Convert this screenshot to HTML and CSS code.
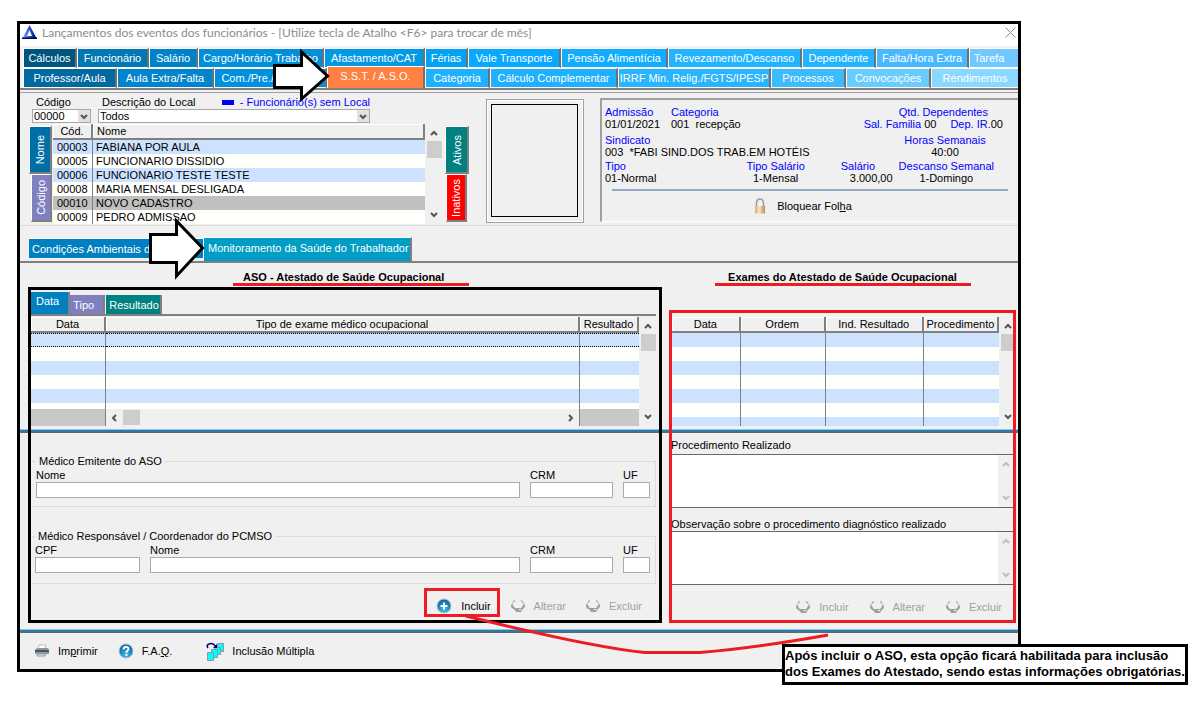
FILE: index.html
```html
<!DOCTYPE html>
<html lang="pt-BR">
<head>
<meta charset="utf-8">
<title>Lançamentos dos eventos dos funcionários</title>
<link rel="stylesheet" href="styles.css">
</head>
<body>
<svg class="defs" aria-hidden="true">
  <defs>
    <linearGradient id="gold" x1="0" x2="1"><stop offset="0" stop-color="#d9ab74"/><stop offset=".45" stop-color="#fbe2bd"/><stop offset="1" stop-color="#b98a55"/></linearGradient>
    <radialGradient id="ball" cx=".5" cy=".8" r=".8"><stop offset="0" stop-color="#3cc0ea"/><stop offset=".6" stop-color="#1682b8"/><stop offset="1" stop-color="#1a5f8c"/></radialGradient>
    <linearGradient id="tri" x1="0" x2="1"><stop offset="0" stop-color="#8ab8ff"/><stop offset=".5" stop-color="#2c50d0"/><stop offset="1" stop-color="#000060"/></linearGradient>
  </defs>
  <symbol id="up" viewBox="0 0 8 6"><path d="M1 5 4 2l3 3" fill="none" stroke="currentColor" stroke-width="2"/></symbol>
  <symbol id="down" viewBox="0 0 8 6"><path d="M1 1l3 3 3-3" fill="none" stroke="currentColor" stroke-width="2"/></symbol>
  <symbol id="off" viewBox="0 0 14 14"><path d="M4 1.500Q1 3 1 7M10 1.500Q13 3 13 7" fill="none" stroke="#a0a0a0" stroke-width="1.200" stroke-dasharray="3 1"/><path d="M0 6h2l1 2 1 1h6l1-1 1-2h2v2l-2 2-1 1-1 2H5l-1-2-2-1-2-2z" fill="#a0a0a0"/><path d="M8 10h2v1H8z" fill="#fff"/></symbol>
</svg>

<main class="window">
  <header class="titlebar">
    <svg width="15" height="15" viewBox="0 0 15 15" aria-hidden="true"><path d="M7.500 0 15 14H0z" fill="url(#tri)"/><path d="M7.500 5 10 11H5z" fill="#fff"/><path d="M0 12.500h15V14H0z" fill="#000060"/></svg>
    <h1>Lançamentos dos eventos dos funcionários - [Utilize tecla de Atalho &lt;F6&gt; para trocar de mês]</h1>
    <button class="close" type="button" aria-label="Fechar"><svg width="11" height="11" viewBox="0 0 11 11"><path d="M.5.5l10 10m0-10l-10 10" stroke="#909090"/></svg></button>
  </header>

  <nav class="tabs">
    <div class="tabrow first">
      <button type="button">Cálculos</button><button type="button">Funcionário</button><button type="button">Salário</button><button type="button">Cargo/Horário Trabalho</button><button type="button">Afastamento/CAT</button><button type="button">Férias</button><button type="button">Vale Transporte</button><button type="button">Pensão Alimentícia</button><button type="button">Revezamento/Descanso</button><button type="button">Dependente</button><button type="button">Falta/Hora Extra</button><button type="button">Tarefa</button>
    </div>
    <div class="tabrow second">
      <button type="button">Professor/Aula</button><button type="button">Aula Extra/Falta</button><button type="button">Com./Pre./Adicional</button><button type="button" class="active">S.S.T. / A.S.O.</button><button type="button">Categoria</button><button type="button">Cálculo Complementar</button><button type="button">IRRF Min. Relig./FGTS/IPESP</button><button type="button">Processos</button><button type="button">Convocações</button><button type="button">Rendimentos</button>
    </div>
  </nav>

  <section class="top">
    <div class="people">
      <div class="place">
        <div class="pick code"><label for="cod">Código</label><div class="combo"><select id="cod"><option>00000</option></select><svg width="8" height="6"><use href="#down"/></svg></div></div>
        <div class="pick local">
          <div class="labels"><label for="loc">Descrição do Local</label><span class="swatch"></span><span class="blue">- Funcionário(s) sem Local</span></div>
          <div class="combo"><select id="loc"><option>Todos</option></select><svg width="8" height="6"><use href="#down"/></svg></div>
        </div>
      </div>
      <div class="roster">
        <div class="vtabs left"><button type="button" class="on">Nome</button><button type="button">Código</button></div>
        <table class="list">
          <thead><tr><th class="c">Cód.</th><th>Nome</th></tr></thead>
          <tbody>
            <tr><td>00003</td><td>FABIANA POR AULA</td></tr>
            <tr><td>00005</td><td>FUNCIONARIO DISSIDIO</td></tr>
            <tr><td>00006</td><td>FUNCIONARIO TESTE TESTE</td></tr>
            <tr><td>00008</td><td>MARIA MENSAL DESLIGADA</td></tr>
            <tr class="selected"><td>00010</td><td>NOVO CADASTRO</td></tr>
            <tr><td>00009</td><td>PEDRO ADMISSAO</td></tr>
          </tbody>
        </table>
        <div class="scroll"><svg width="8" height="6"><use href="#up"/></svg><i></i><svg width="8" height="6"><use href="#down"/></svg></div>
        <div class="vtabs right"><button type="button" class="on">Ativos</button><button type="button">Inativos</button></div>
      </div>
    </div>
    <div class="photo"><div></div></div>
    <div class="info">
      <div class="line">
        <p class="w1"><b>Admissão</b>01/01/2021</p><p><b>Categoria</b>001&nbsp; recepção</p>
        <div class="deps"><b>Qtd. Dependentes</b><span><b>Sal. Familia</b> 00</span><span class="ir"><b>Dep. IR.</b>00</span></div>
      </div>
      <div class="line second-line">
        <p><b>Sindicato</b>003&nbsp; *FABI SIND.DOS TRAB.EM HOTÉIS</p><p class="mid hours"><b>Horas Semanais</b>40:00</p>
      </div>
      <div class="line">
        <p><b>Tipo</b>01-Normal</p><p class="mid kind"><b>Tipo Salário</b>1-Mensal</p><p class="pay"><b>Salário</b><span>3.000,00</span></p><p class="mid rest"><b>Descanso Semanal</b>1-Domingo</p>
      </div>
      <hr>
      <button type="button" class="lock"><svg width="12" height="16" viewBox="0 0 12 16"><path d="M2.500 8V4.500Q3 1 6 1t3.500 3.500V8" fill="none" stroke="#9a9a9a" stroke-width="1.500"/><rect x="1" y="8" width="10" height="7.500" fill="url(#gold)"/></svg><span>Bloquear Fol<u>h</u>a</span></button>
    </div>
  </section>

  <nav class="subtabs">
    <button type="button">Condições Ambientais de Trab.</button><button type="button" class="active">Monitoramento da Saúde do Trabalhador</button>
  </nav>

  <section class="board">
    <h2 class="ht-left"><span>ASO - Atestado de Saúde Ocupacional</span></h2>
    <h2 class="ht-right"><span>Exames do Atestado de Saúde Ocupacional</span></h2>

    <div class="aso">
      <div class="sort"><button type="button" class="on">Data</button><button type="button">Tipo</button><button type="button">Resultado</button></div>
      <div class="gridbox">
        <table class="list exams">
          <colgroup><col class="k1"><col><col class="k3"></colgroup>
          <thead><tr><th>Data</th><th>Tipo de exame médico ocupacional</th><th>Resultado</th></tr></thead>
          <tbody>
            <tr class="focus"><td></td><td></td><td></td></tr><tr><td></td><td></td><td></td></tr><tr><td></td><td></td><td></td></tr><tr><td></td><td></td><td></td></tr><tr><td></td><td></td><td></td></tr><tr class="cut"><td></td><td></td><td></td></tr>
          </tbody>
          <tfoot><tr><td></td><td><div class="hscroll"><svg width="6" height="8" viewBox="0 0 6 8"><path d="M5 1 2 4l3 3" fill="none" stroke="#555" stroke-width="2"/></svg><i></i><svg width="6" height="8" viewBox="0 0 6 8"><path d="M1 1l3 3-3 3" fill="none" stroke="#555" stroke-width="2"/></svg></div></td><td></td></tr></tfoot>
        </table>
        <div class="scroll"><svg width="8" height="6"><use href="#up"/></svg><i></i><svg width="8" height="6"><use href="#down"/></svg></div>
      </div>
    </div>

    <div class="exames gridbox">
      <table class="list exams">
        <colgroup><col class="r1"><col class="r2"><col class="r3"><col class="r4"></colgroup>
        <thead><tr><th>Data</th><th>Ordem</th><th>Ind. Resultado</th><th>Procedimento</th></tr></thead>
        <tbody>
          <tr><td></td><td></td><td></td><td></td></tr><tr><td></td><td></td><td></td><td></td></tr><tr><td></td><td></td><td></td><td></td></tr><tr><td></td><td></td><td></td><td></td></tr><tr><td></td><td></td><td></td><td></td></tr><tr><td></td><td></td><td></td><td></td></tr><tr class="last"><td></td><td></td><td></td><td></td></tr>
        </tbody>
      </table>
      <div class="scroll"><svg width="8" height="6"><use href="#up"/></svg><i></i><svg width="8" height="6"><use href="#down"/></svg></div>
    </div>

    <hr class="rule">

    <form class="doctors">
      <fieldset class="f1">
        <legend>Médico Emitente do ASO</legend>
        <div><label for="n1">Nome</label><input id="n1"></div><div><label for="c1">CRM</label><input id="c1"></div><div><label for="u1">UF</label><input id="u1"></div>
      </fieldset>
      <fieldset class="f2">
        <legend>Médico Responsável / Coordenador do PCMSO</legend>
        <div><label for="cpf">CPF</label><input id="cpf"></div><div><label for="n2">Nome</label><input id="n2"></div><div><label for="c2">CRM</label><input id="c2"></div><div><label for="u2">UF</label><input id="u2"></div>
      </fieldset>
      <div class="actions">
        <button type="button" class="add"><svg width="16" height="16" viewBox="0 0 16 16"><circle cx="8" cy="8" r="7" fill="url(#ball)" stroke="#b8c4cc"/><path d="M8 4.500v7M4.500 8h7" stroke="#fff" stroke-width="2"/></svg>Incluir</button>
        <button type="button" disabled><svg width="14" height="14"><use href="#off"/></svg>Alterar</button>
        <button type="button" disabled><svg width="14" height="14"><use href="#off"/></svg>Excluir</button>
      </div>
    </form>

    <form class="notes">
      <label for="proc">Procedimento Realizado</label>
      <div class="memo"><textarea id="proc"></textarea><div class="scroll dim"><svg width="8" height="6"><use href="#up"/></svg><svg width="8" height="6"><use href="#down"/></svg></div></div>
      <label for="obs">Observação sobre o procedimento diagnóstico realizado</label>
      <div class="memo"><textarea id="obs"></textarea><div class="scroll dim"><svg width="8" height="6"><use href="#up"/></svg><svg width="8" height="6"><use href="#down"/></svg></div></div>
      <div class="actions">
        <button type="button" disabled><svg width="14" height="14"><use href="#off"/></svg>Incluir</button>
        <button type="button" disabled><svg width="14" height="14"><use href="#off"/></svg>Alterar</button>
        <button type="button" disabled><svg width="14" height="14"><use href="#off"/></svg>Excluir</button>
      </div>
    </form>

    <div class="frame black"></div>
    <div class="frame red"></div>
  </section>

  <hr class="rule">
  <footer class="foot">
    <button type="button"><svg width="16" height="14" viewBox="0 0 16 14"><path d="M4 5 5 1h7l-1 4z" fill="#fff" stroke="#bbb"/><path d="M1 6l2-2h11l1 2v4H1z" fill="#8f979c"/><path d="M1 6h14v2H1z" fill="#4e565c"/><path d="M3 10h9l-1 2H3z" fill="#e8e8e8" stroke="#999"/><path d="M12 9h2" stroke="#35b5e8"/></svg><span>Im<u>p</u>rimir</span></button>
    <button type="button"><svg width="16" height="16" viewBox="0 0 16 16"><circle cx="8" cy="8" r="7" fill="url(#ball)" stroke="#b8c4cc"/><path d="M5.500 6.500Q5.500 4 8 4t2.500 2Q10.500 7 8.500 8.500V10" fill="none" stroke="#fff" stroke-width="1.800"/><path d="M7.500 11h2v1.800h-2z" fill="#fff"/></svg><span>F.A.<u>Q</u>.</span></button>
    <button type="button"><svg width="18" height="19" viewBox="0 0 18 19"><g fill="#00ffff" stroke="#8a9a9a"><path d="M11.500 1.500h6v8h-6z"/><path d="M8.500 5.500h6v7h-6z"/><path d="M5.500 7.500h6v8h-6z"/><path d="M1.500 10.500h6v8h-6z"/></g><path d="M2 6Q0 3 3 2q4-2 7 3" fill="none" stroke="#000080" stroke-width="1.500"/><path d="M11 2v4H7z" fill="#000080"/></svg><span>Inclusão Múltipla</span></button>
  </footer>

  <svg class="marks" width="1000" height="648" viewBox="20 24 1000 648" aria-hidden="true">
    <path d="M274.500 65.500H301.500V52L327.500 76 301.500 99V87.500H274.500z" fill="#fff" stroke="#000" stroke-width="3"/>
    <path d="M150.500 234.500H176.500V221L202.500 248 176.500 276V262.500H150.500z" fill="#fff" stroke="#000" stroke-width="3"/>
    <path d="M424 588h76v29h-76z M427 591v23h70v-23z" fill="#ed1c24" fill-rule="evenodd"/>
    <path d="M466 616Q590 647 645 652.500H700Q755 648 828 635" fill="none" stroke="#ed1c24" stroke-width="3"/>
  </svg>
  <aside class="callout">Após incluir o ASO, esta opção ficará habilitada para inclusão<br>dos Exames do Atestado, sendo estas informações obrigatórias.</aside>
</main>
</body>
</html>
```
FILE: styles.css
```css
* { box-sizing: border-box; }
body { margin: 0; padding: 21px 181px 34px 17px; background: #fff; color: #000; font: 11px/12px "Liberation Sans", Arial, sans-serif; }
button, input, select, textarea { font: inherit; color: inherit; margin: 0; padding: 0; border: 0; border-radius: 0; background: none; }
button { white-space: nowrap; }
p, h1, h2 { margin: 0; }
svg { display: block; flex: none; }
.defs { position: absolute; width: 0; height: 0; }

.window { position: relative; border: 3px solid #000; background: #f0f0f0; }

.titlebar { display: flex; align-items: center; gap: 5px; height: 22px; padding: 0 2px 5px; background: #fff; }
.titlebar h1 { flex: 1; font: 12px/16px Lato, "Open Sans", sans-serif; color: #8c8c8c; white-space: nowrap; }

/* main tabs */
.tabs { padding: 2px 0 0 3px; border-bottom: 2px solid #808080; }
.tabrow { display: grid; height: 20px; }
.first { grid-template-columns: 54fr 72fr 49fr 126fr 101fr 43fr 93fr 107fr 134fr 74fr 93fr 49fr; }
.second { grid-template-columns: 94fr 97fr 113fr 98fr 65fr 128fr 153fr 75fr 85fr 87fr; }
.tabrow button { min-width: 0; overflow: hidden; color: #fff; border: 1px solid #fff; border-right: 2px solid #707070; }
.tabrow button:last-child { border-right: 0; }
.first :last-child { padding-right: 10px; }
.first :nth-child(1) { background: #00557f; }
.first :nth-child(2) { background: #0078b4; }
.first :nth-child(3) { background: #0082c8; }
.first :nth-child(4) { background: #008fd8; }
.first :nth-child(5) { background: #0099e5; }
.first :nth-child(6) { background: #00a2f3; }
.first :nth-child(7) { background: #06a9ff; }
.first :nth-child(8) { background: #12adff; }
.first :nth-child(9), .first :nth-child(10) { background: #22b4ff; }
.first :nth-child(11) { background: #48b8ff; }
.first :nth-child(12) { background: #70c8ff; }
.second :nth-child(1) { background: #0069a0; }
.second :nth-child(2) { background: #0084cc; }
.second :nth-child(3) { background: #0090dc; }
.second :nth-child(5), .second :nth-child(6) { background: #1fb0ff; }
.second :nth-child(7) { background: #28b4ff; }
.second :nth-child(8) { background: #3cbcff; }
.second :nth-child(9) { background: #68ccff; }
.second :nth-child(10) { background: #8ad8ff; }
.second .active { margin: -2px 0 0; padding-bottom: 3px; background: #ff8040; border-bottom: 0; }

/* employee area */
.top { display: flex; align-items: flex-start; padding: 3px 0 1px 9px; border-top: 1px solid #a0a0a0; border-bottom: 1px solid #d8d8d8; margin-top: 2px; }
.people { flex: none; width: 441px; }
.place { display: flex; gap: 7px; padding-left: 3px; }
.code { width: 59px; }
.code label { padding-left: 4px; }
.local { width: 272px; }
.labels { display: flex; align-items: center; padding-left: 4px; white-space: nowrap; }
.swatch { width: 14px; height: 5px; margin: 0 6px 0 26px; background: #00f; }
.blue, .info b { color: #00f; font-weight: normal; }
.combo { display: grid; margin-top: 1px; border: 1px solid #a8a8a8; background: #fff; }
.combo > * { grid-area: 1 / 1; }
.combo select { appearance: none; height: 12px; width: 100%; padding-left: 1px; outline: 0; }
.combo svg { justify-self: end; width: 12px; height: 12px; padding: 4px 2px 2px; background: #e1e1e1; color: #555; pointer-events: none; }
.roster { display: flex; margin-top: 1px; }
.list { table-layout: fixed; border-spacing: 0; width: 100%; }
.list th { height: 16px; padding: 0 4px; font-weight: normal; line-height: 12px; text-align: left; border: solid #808080; border-width: 0 2px 2px 0; box-shadow: inset 1px 1px #fff; }
.list td { height: 14px; padding: 0 3px; line-height: 14px; background: #fffffc; border-right: 1px solid #808080; white-space: nowrap; }
.list tbody tr:nth-child(odd) td { background: #cce2ff; }
.list tbody tr.selected td { background: #c0c0c0; }
.list td:last-child { border-right: 0; }
.roster .list { width: 372px; }
.roster .c { width: 40px; text-align: center; }
.roster td:first-child { padding-left: 4px; }
.vtabs { display: flex; flex-direction: column; padding-top: 2px; }
.vtabs button { writing-mode: sideways-lr; height: 48px; color: #fff; border: 1px solid #fff; border-right: 2px solid #808080; border-bottom: 2px solid #808080; }
.left { width: 24px; padding-right: 1px; }
.left button { margin-left: 2px; background: #8080c0; }
.left .on { margin: 0; background: #006fa6; }
.right { width: 24px; margin-left: 3px; }
.right button { margin: 0 2px 0 1px; background: #f00; }
.right .on { margin: 0; background: #008080; }
.scroll { display: flex; flex-direction: column; align-items: center; flex: none; width: 16px; margin-left: 1px; padding: 6px 0; background: #f0f0f0; color: #555; }
.scroll i { width: 15px; height: 17px; margin: 5px 0 auto; background: #cdcdcd; }
.photo { flex: none; width: 98px; height: 124px; margin: 3px 16px 0; padding: 4px; border: 1px solid #a0a0a0; outline: 1px solid #fff; outline-offset: -2px; border-right-width: 2px; border-bottom-width: 2px; }
.photo div { height: 100%; border: 1px solid #000; }
.info { flex: 1; margin-top: 2px; padding: 6px 9px 6px 3px; border: solid #a0a0a0; border-width: 2px 0 0 2px; border-bottom: 1px solid #fff; }
.line { display: flex; height: 24px; white-space: nowrap; }
.line:first-child { margin-bottom: 4px; }
.second-line { margin-bottom: 2px; }
.info p b, .deps > b { display: block; }
.w1 { width: 66px; }
.mid { text-align: center; }
.deps { margin-left: auto; display: grid; grid-template-columns: auto auto; column-gap: 14px; padding-right: 6px; }
.deps > b { grid-column: 1 / 3; text-align: center; padding-left: 20px; }
.hours { margin-left: auto; width: 94px; margin-right: 17px; }
.kind { margin-left: auto; }
.pay { margin: 0 6px 0 36px; }
.pay span { padding-left: 9px; }
.rest { margin-right: 15px; }
.info hr { height: 2px; margin: 5px 1px 6px 7px; border: 0; background: #92a7c0; }
.lock { display: flex; align-items: center; gap: 11px; margin: 0 auto; height: 18px; padding-right: 8px; }

/* page tabs */
.subtabs { display: flex; align-items: flex-end; margin-top: 11px; padding-left: 9px; border-bottom: 2px solid #808080; height: 26px; }
.subtabs button { height: 20px; padding: 0 4px 0 3px; background: #0080c0; color: #fff; border-top: 1px solid #fff; margin-bottom: 3px; width: 174px; overflow: hidden; text-align: left; }
.subtabs .active { height: 24px; width: auto; margin: 0; padding: 0 1px 4px 4px; background: #009dc4; border: 1px solid #fff; border-right: 2px solid #808080; border-bottom: 0; }

/* board: two columns, with the annotation frames laid over their rows */
.board { display: grid; grid-template-columns: 634fr 347fr; grid-template-rows: 24px auto auto auto; column-gap: 7px; padding: 0 2px 6px 8px; }
.board h2 { font: bold 11px/12px "Liberation Sans", Arial, sans-serif; text-align: center; padding-top: 8px; }
.board h2 span { display: inline-block; padding: 0 10px; border-bottom: 3px solid #ed1c24; white-space: nowrap; }
.board .ht-left { padding-left: 12px; }
.ht-left span { min-width: 236px; text-align: left; }
.ht-right span { min-width: 256px; }
.aso { grid-area: 2 / 1; padding: 5px 6px 0 3px; }
.exames { grid-area: 2 / 2; padding: 30px 0 0 3px; }
.board > .rule { grid-area: 3 / 1 / 4 / 3; margin: 3px -2px 0 -8px; }
.rule { height: 4px; margin: 0; border: solid; border-width: 1px 0 1px; border-color: #8cc8ec #666 #666; background: #2d7ba5; }
.doctors { grid-area: 4 / 1; padding: 22px 6px 0 3px; }
.notes { grid-area: 4 / 2; padding: 6px 2px 0 2px; }
.frame { pointer-events: none; border: 3px solid; z-index: 1; }
.black { grid-area: 2 / 1 / 5 / 2; border-color: #000; }
.red { grid-area: 2 / 2 / 5 / 3; border-color: #ed1c24; margin-top: 23px; }
.sort { display: flex; align-items: flex-end; height: 24px; border-bottom: 2px solid #808080; }
.sort button { height: 19px; padding: 0 1px 0 3px; color: #fff; background: #008080; border-right: 2px solid #808080; }
.sort .on { height: 22px; padding: 0 9px 4px 5px; background: #0080c0; }
.sort button:nth-child(2) { padding-right: 9px; background: #8080c0; margin-right: 1px; }
.gridbox { display: flex; align-items: stretch; }
.aso .gridbox { margin-top: 1px; }
.exams th { text-align: center; padding: 0 1px; white-space: nowrap; }
.exams td { padding: 0; }
.k1 { width: 75px; }
.k3 { width: 59px; }
.r1 { width: 21%; }
.r2 { width: 26%; }
.r3 { width: 30%; }
.r4 { width: 23%; }
.focus td { border-top: 1px dotted #000; border-bottom: 1px dotted #000; }
.list .cut td { height: 6px; line-height: 6px; }
.list .last td { height: 9px; line-height: 9px; }
.exams tfoot td { height: 17px; background: #c8c8c8; }
.hscroll { display: flex; align-items: center; height: 17px; padding: 0 5px; background: #f0f0f0; }
.hscroll i { width: 17px; height: 15px; margin: 0 auto 0 6px; background: #cdcdcd; }

fieldset { display: grid; margin: 0; border: 1px solid #dcdcdc; border-left: 0; min-width: 0; }
legend { padding: 0 3px; margin-left: 0; }
.f1 { grid-template-columns: 1fr 83px 27px; gap: 10px; padding: 2px 5px 8px 5px; }
.f2 { grid-template-columns: 105px 1fr 83px 27px; gap: 10px; padding: 2px 5px 10px 4px; margin-top: 23px; }
fieldset label, fieldset input { display: block; }
fieldset input { width: 100%; height: 16px; margin-top: 1px; border: 1px solid #ababab; background: #fff; }
.actions { display: flex; justify-content: flex-end; gap: 20px; padding: 14px 14px 8px 0; }
.actions button { display: flex; align-items: center; gap: 9px; height: 16px; }
.actions button:disabled { color: #a0a0a0; }
.notes label { display: block; }
.memo { display: flex; margin: 3px 0 10px; border: solid #696969; border-width: 1px 0; }
.memo + label + .memo { margin: 1px 0 0; }
.memo textarea { flex: 1; display: block; height: 52px; resize: none; background: #fff; }
.dim { justify-content: space-between; margin: 0; color: #bfbfbf; }
.notes .actions { padding-right: 12px; gap: 21px; }

.foot { display: flex; align-items: center; gap: 20px; height: 36px; padding: 0 14px; }
.foot button { display: flex; align-items: center; gap: 8px; }
.foot button + button + button { margin-left: 14px; }

/* annotations */
.marks { position: absolute; top: 0; left: 0; pointer-events: none; z-index: 2; }
.callout { position: absolute; top: 620px; left: 762px; z-index: 3; padding: 1px 0 2px; border: 3px solid #000; background: #fff; font-size: 13px; font-weight: bold; line-height: 16px; white-space: nowrap; }
```
